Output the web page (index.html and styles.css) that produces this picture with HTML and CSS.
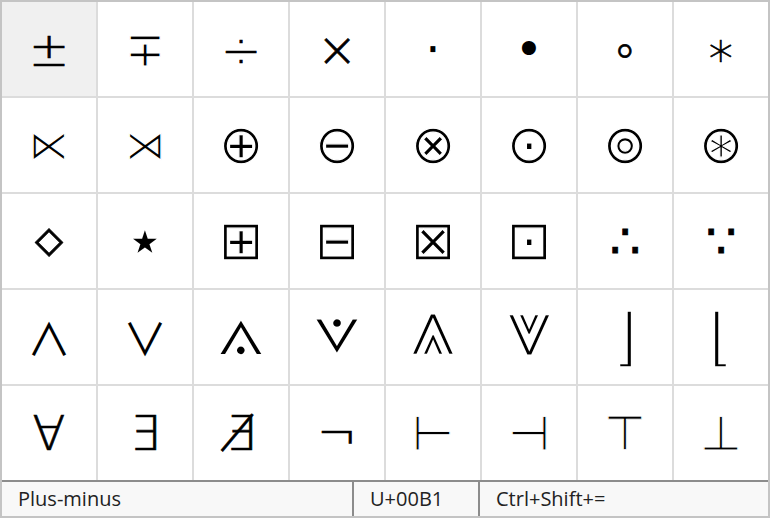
FILE: index.html
```html
<!DOCTYPE html>
<html lang="en">
<head>
    <meta charset="UTF-8">
    <title>Symbols</title>
    <link rel="stylesheet" href="styles.css">
</head>
<body>

    <div class="picker">
        <div class="grid">
            <div class="cell selected">±</div>
            <div class="cell reg">∓</div>
            <div class="cell">÷</div>
            <div class="cell">×</div>
            <div class="cell dot">⋅</div>
            <div class="cell dot">•</div>
            <div class="cell">∘</div>
            <div class="cell">∗</div>

            <div class="cell reg bowtie">⋉</div>
            <div class="cell reg bowtie">⋊</div>
            <div class="cell reg circled">⊕</div>
            <div class="cell reg circled">⊖</div>
            <div class="cell reg circled">⊗</div>
            <div class="cell reg circled">⊙</div>
            <div class="cell reg circled">⊚</div>
            <div class="cell reg circled">⊛</div>

            <div class="cell diamond">⋄</div>
            <div class="cell dot star">⋆</div>
            <div class="cell reg circled">⊞</div>
            <div class="cell reg circled">⊟</div>
            <div class="cell reg circled">⊠</div>
            <div class="cell reg circled">⊡</div>
            <div class="cell dot dots">∴</div>
            <div class="cell dot dots">∵</div>

            <div class="cell wedge">∧</div>
            <div class="cell wedge">∨</div>
            <div class="cell reg double">⟑</div>
            <div class="cell reg double">⟇</div>
            <div class="cell reg double">⩓</div>
            <div class="cell reg double">⩔</div>
            <div class="cell reg floor">⌋</div>
            <div class="cell reg floor">⌊</div>

            <div class="cell">∀</div>
            <div class="cell">∃</div>
            <div class="cell">∄</div>
            <div class="cell">¬</div>
            <div class="cell reg tack">⊢</div>
            <div class="cell reg tack">⊣</div>
            <div class="cell reg tack">⊤</div>
            <div class="cell reg tack">⊥</div>
        </div>

        <div class="status">
            <span class="name">Plus-minus</span>
            <span class="code">U+00B1</span>
            <span class="keys">Ctrl+Shift+=</span>
        </div>
    </div>

</body>
</html>
```

FILE: styles.css
```css
body {
    margin: 0;
    font-family: "Open Sans", sans-serif;
    color: #222;
    background: #fff;
}
.picker {
    width: 770px;
    height: 518px;
    box-sizing: border-box;
    border: 2px solid #c4c4c4;
    display: flex;
    flex-direction: column;
}
.grid {
    display: grid;
    grid-template-columns: repeat(8, 94px);
    grid-template-rows: repeat(5, 94px);
    gap: 2px;
    background-color: #dcdcdc;
}
.cell {
    background-color: #fff;
    display: flex;
    align-items: center;
    justify-content: center;
    font-family: "DejaVu Sans", sans-serif;
    font-weight: 200;
    font-size: 48px;
    line-height: 1;
    color: #000;
    -webkit-text-stroke: 0.7px #000;
}
.cell.selected {
    background-color: #f0f0f0;
}

/* glyphs missing from the light face: thin the regular one */
.cell.reg {
    font-weight: 400;
    -webkit-text-stroke: 1.2px #fff;
}
.cell.tack {
    -webkit-text-stroke: 0.9px #fff;
}
.cell.dot {
    font-weight: 400;
    -webkit-text-stroke: 0;
}
.cell.dots {
    -webkit-text-stroke: 0.8px #000;
}
.cell.star {
    font-size: 62px;
}
.cell.diamond {
    font-size: 56px;
}
.cell.bowtie {
    font-size: 40px;
}
.cell.circled {
    font-size: 54px;
}
.cell.wedge {
    font-family: "Noto Sans CJK JP", "DejaVu Sans", sans-serif;
    font-weight: 400;
    font-size: 44px;
    -webkit-text-stroke: 0;
}
.cell.double {
    font-size: 82px;
    line-height: 0.7;
    padding-bottom: 20px;
    -webkit-text-stroke: 2.4px #fff;
}
.cell.floor {
    font-size: 64px;
    -webkit-text-stroke: 2.6px #fff;
}

.status {
    flex: 1;
    display: grid;
    grid-template-columns: 350px 126px 1fr;
    border-top: 2px solid #8c8c8c;
    background-color: #f8f8f8;
    font-size: 20px;
    line-height: 34px;
}
.status span {
    padding-left: 16px;
}
.status .code,
.status .keys {
    border-left: 2px solid #8c8c8c;
}
```
